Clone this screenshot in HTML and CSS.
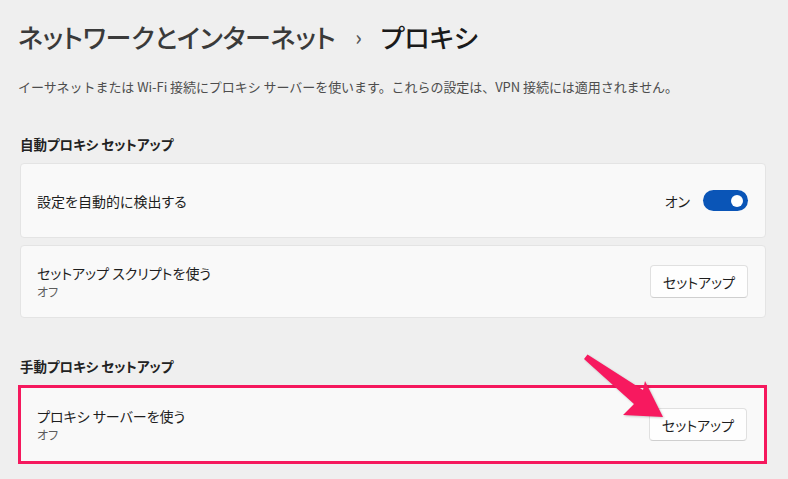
FILE: index.html
```html
<!DOCTYPE html>
<html lang="ja">
<head>
<meta charset="utf-8">
<link rel="stylesheet" href="styles.css">
</head>
<body>
<main class="page">
  <h1 class="title"><span class="crumb">ネットワークとインターネット</span><span class="sep">›</span><span class="current">プロキシ</span></h1>
  <p class="desc">イーサネットまたは Wi-Fi 接続にプロキシ サーバーを使います。これらの設定は、VPN 接続には適用されません。</p>

  <h2 class="section">自動プロキシ セットアップ</h2>
  <div class="cards">
    <div class="card tall">
      <div class="label"><div class="name">設定を自動的に検出する</div></div>
      <div class="ctrl"><span class="state">オン</span><span class="toggle"><span class="knob"></span></span></div>
    </div>
    <div class="card">
      <div class="label"><div class="name">セットアップ スクリプトを使う</div><div class="sub">オフ</div></div>
      <button class="btn">セットアップ</button>
    </div>
  </div>

  <h2 class="section second">手動プロキシ セットアップ</h2>
  <div class="highlight">
    <div class="card inner">
      <div class="label"><div class="name">プロキシ サーバーを使う</div><div class="sub">オフ</div></div>
      <button class="btn">セットアップ</button>
    </div>
  </div>

  <svg class="arrow" width="100" height="80" viewBox="0 0 100 80">
    <path d="M5 5 L8.5 0.5 L64 36 L66 27 L84 63 L44 61 L55 50 Z" fill="#f7195f"/>
  </svg>
</main>
</body>
</html>
```
FILE: styles.css
```css
html, body {
  margin: 0;
  padding: 0;
  background: #efefef;
}
body {
  font-family: "Noto Sans CJK JP", "Noto Sans", sans-serif;
  font-feature-settings: "palt";
  color: #1b1b1b;
  width: 788px;
  height: 479px;
  overflow: hidden;
}
.page {
  position: relative;
  padding: 19px 22px 0 20px;
}
.title {
  margin: 0 0 0 -2px;
  font-size: 26px;
  line-height: 36px;
  font-weight: 500;
  display: flex;
  align-items: center;
  letter-spacing: -0.2px;
}
.crumb { color: #3a3a3a; }
.sep {
  color: #555;
  font-size: 21px;
  margin: 0 19px 0 20px;
  position: relative;
  top: -1px;
}
.current { color: #1a1a1a; }
.desc {
  margin: 23px 0 0 -2px;
  font-size: 13px;
  line-height: 18px;
  color: #4d4d4d;
  font-feature-settings: normal;
  letter-spacing: -0.05px;
}
.section {
  margin: 39px 0 0 0;
  font-size: 13.5px;
  line-height: 18px;
  font-weight: 700;
  color: #222;
}
.section.second { margin-top: 39px; }
.cards {
  margin-top: 10px;
  display: flex;
  flex-direction: column;
  gap: 7px;
}
.card {
  background: #f9f9f9;
  border: 1px solid #e4e4e4;
  border-radius: 4px;
  height: 73px;
  box-sizing: border-box;
  display: flex;
  align-items: center;
  justify-content: space-between;
  padding: 0 17px 0 16px;
}
.card.tall { height: 75px; }
.name {
  font-size: 14px;
  line-height: 20px;
  color: #1e1e1e;
}
.sub {
  font-size: 12px;
  line-height: 16px;
  color: #5c5c5c;
  margin-top: 1px;
}
.ctrl {
  display: flex;
  align-items: center;
  gap: 13px;
}
.state {
  font-size: 14px;
  color: #1e1e1e;
}
.toggle {
  width: 45px;
  height: 21px;
  border-radius: 11px;
  background: #0a55b7;
  display: flex;
  align-items: center;
  justify-content: flex-end;
  padding-right: 5px;
  box-sizing: border-box;
}
.knob {
  width: 12px;
  height: 12px;
  border-radius: 50%;
  background: #fff;
}
.btn {
  width: 98px;
  height: 33px;
  border: 1px solid #e0e0e0;
  border-bottom-color: #cfcfcf;
  border-radius: 4px;
  background: #fefefe;
  font-family: inherit;
  font-feature-settings: "palt";
  font-size: 14px;
  color: #1e1e1e;
  padding: 0;
}
.highlight {
  margin: 10px 0 0 -2px;
  width: 749px;
  border: 3px solid #f5185d;
  box-sizing: border-box;
}
.card.inner {
  border: none;
  border-radius: 0;
  height: 73px;
  padding: 0 17px 0 16px;
}
.arrow {
  position: absolute;
  left: 579px;
  top: 354px;
  filter: drop-shadow(1px 1px 1px rgba(0,0,0,0.2));
}
```
